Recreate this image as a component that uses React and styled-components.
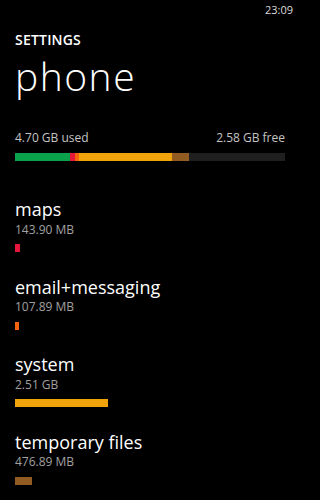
import React from "react";
import styled, { createGlobalStyle } from "styled-components";

const GlobalStyle = createGlobalStyle`
  html, body {
    margin: 0;
    padding: 0;
    background: #000;
  }
  body {
    font-family: "Open Sans", "Noto Sans", sans-serif;
    color: #fff;
    -webkit-font-smoothing: antialiased;
  }
`;

const GB_TOTAL = 4.7 + 2.58;

const categories = [
  { key: "apps", size: 1.478, color: "#0aa24b", hidden: true },
  { key: "maps", label: "maps", size: 0.1405, sizeText: "143.90 MB", color: "#e5173a" },
  { key: "email", label: "email+messaging", size: 0.1054, sizeText: "107.89 MB", color: "#f7630c" },
  { key: "system", label: "system", size: 2.51, sizeText: "2.51 GB", color: "#f0a30a" },
  { key: "temp", label: "temporary files", size: 0.4657, sizeText: "476.89 MB", color: "#915b22" },
];

const Screen = styled.div`
  width: 300px;
  height: 500px;
  overflow: hidden;
  background: #000;
`;

const StatusBar = styled.div`
  height: 20px;
  display: flex;
  justify-content: flex-end;
  align-items: center;
  padding-right: 7px;
  font-size: 11px;
  line-height: 20px;
  color: #dcdcdc;
`;

const Content = styled.div`
  padding: 0 15px;
`;

const AppTitle = styled.div`
  margin-top: 9.5px;
  font-size: 14px;
  font-weight: 600;
  line-height: 20px;
  letter-spacing: 0.2px;
`;

const PageTitle = styled.h1`
  margin: 4.6px 0 0;
  font-size: 39px;
  font-weight: 300;
  line-height: 44px;
  letter-spacing: 1.5px;
`;

const UsageRow = styled.div`
  margin-top: 31.5px;
  display: flex;
  justify-content: space-between;
  font-size: 12px;
  line-height: 16px;
  color: #c4c4c4;
`;

const StorageBar = styled.div`
  margin-top: 7px;
  height: 8px;
  display: flex;
  background: #1f1f1f;
`;

const Segment = styled.div`
  height: 100%;
  flex: none;
  background: ${(p) => p.$color};
`;

const List = styled.div`
  margin-top: 37.5px;
  display: flex;
  flex-direction: column;
  gap: 23.5px;
`;

const Item = styled.div`
  display: flex;
  flex-direction: column;
`;

const ItemTitle = styled.div`
  font-size: 18px;
  line-height: 22px;
`;

const ItemSize = styled.div`
  margin-top: 1.5px;
  font-size: 12px;
  line-height: 16px;
  color: #a0a0a0;
`;

const ItemBar = styled.div`
  margin-top: 6.5px;
  height: 8px;
  background: ${(p) => p.$color};
`;

export default function App() {
  const barWidth = 270;
  const pxPerGb = barWidth / GB_TOTAL;

  return (
    <>
      <GlobalStyle />
      <Screen>
        <StatusBar>23:09</StatusBar>
        <Content>
          <AppTitle>SETTINGS</AppTitle>
          <PageTitle>phone</PageTitle>

          <UsageRow>
            <span>4.70 GB used</span>
            <span>2.58 GB free</span>
          </UsageRow>
          <StorageBar>
            {categories.map((c) => (
              <Segment key={c.key} $color={c.color} style={{ width: c.size * pxPerGb }} />
            ))}
          </StorageBar>

          <List>
            {categories
              .filter((c) => !c.hidden)
              .map((c) => (
                <Item key={c.key}>
                  <ItemTitle>{c.label}</ItemTitle>
                  <ItemSize>{c.sizeText}</ItemSize>
                  <ItemBar $color={c.color} style={{ width: c.size * pxPerGb }} />
                </Item>
              ))}
          </List>
        </Content>
      </Screen>
    </>
  );
}
